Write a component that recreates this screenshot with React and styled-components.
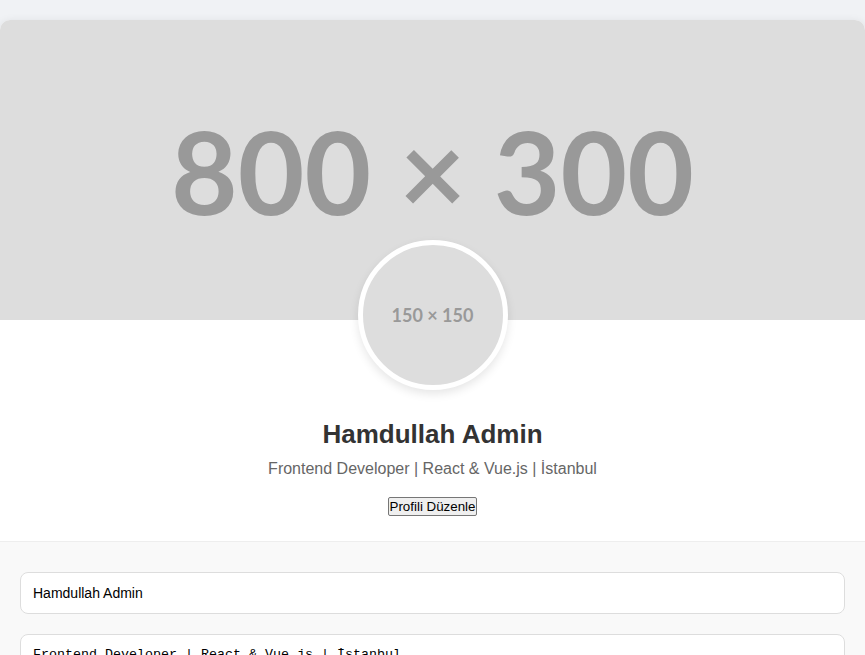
import React from 'react'
import styled, { createGlobalStyle } from 'styled-components'

/*=====================================================
profile page: cover, avatar, info and the edit form
=====================================================*/

const GlobalStyle = createGlobalStyle`
  body {
    margin: 0;
    background: #f0f2f5;
    font-family: "Liberation Sans", Arial, sans-serif;
  }
`

export default function App() {
  const name = 'Hamdullah Admin'
  const bio = 'Frontend Developer | React & Vue.js | İstanbul'

  return (
    <>
      <GlobalStyle />
      <Card>
        <Cover>
          <PlaceholderText size={115}>800 × 300</PlaceholderText>
        </Cover>
        <Info>
          <Avatar>
            <PlaceholderText size={18}>150 × 150</PlaceholderText>
          </Avatar>
          <Name>{name}</Name>
          <Bio>{bio}</Bio>
          <EditButton>Profili Düzenle</EditButton>
        </Info>
        <Form>
          <Input type="text" defaultValue={name} />
          <TextArea defaultValue={bio} rows={4} />
        </Form>
      </Card>
    </>
  )
}

const Card = styled.div`
  max-width: 900px;
  margin: 20px auto;
  background: #fff;
  border-radius: 10px;
  overflow: hidden;
  box-shadow: 0 2px 10px rgba(0, 0, 0, 0.1);
`

const Cover = styled.div`
  height: 300px;
  background: #dddddd;
  display: flex;
  align-items: center;
  justify-content: center;
`

const PlaceholderText = styled.span`
  font-family: Lato, "Liberation Sans", sans-serif;
  font-weight: 700;
  font-size: ${props => props.size}px;
  color: #999999;
  line-height: 1;
  white-space: nowrap;
`

const Info = styled.div`
  text-align: center;
  padding: 0 20px 25px;
`

const Avatar = styled.div`
  width: 150px;
  height: 150px;
  box-sizing: border-box;
  margin: -80px auto 0;
  border-radius: 50%;
  border: 5px solid #fff;
  background: #dddddd;
  box-shadow: 0 4px 10px rgba(0, 0, 0, 0.1);
  display: flex;
  align-items: center;
  justify-content: center;
  position: relative;
`

const Name = styled.h1`
  margin: 29px 0 0;
  font-size: 26px;
  font-weight: 700;
  color: #333;
`

const Bio = styled.p`
  margin: 10px 0 0;
  font-size: 16px;
  color: #666;
`

const EditButton = styled.button`
  margin-top: 19px;
  padding: 1px 1px;
  font-family: "Liberation Sans", Arial, sans-serif;
  font-size: 13.33px;
  color: #000;
  background: #efefef;
  border: 1px solid #767676;
  border-radius: 2px;
`

const Form = styled.div`
  background: #f9f9f9;
  border-top: 1px solid #eee;
  padding: 30px 20px;
  display: flex;
  flex-direction: column;
  gap: 20px;
`

const Input = styled.input`
  padding: 12px;
  border: 1px solid #ddd;
  border-radius: 8px;
  font-family: "Liberation Sans", Arial, sans-serif;
  font-size: 14px;
  color: #000;
  background: #fff;
  outline: none;
`

const TextArea = styled.textarea`
  padding: 12px;
  border: 1px solid #ddd;
  border-radius: 8px;
  font-family: "Liberation Mono", monospace;
  font-size: 13.33px;
  background: #fff;
  resize: vertical;
  outline: none;
`
